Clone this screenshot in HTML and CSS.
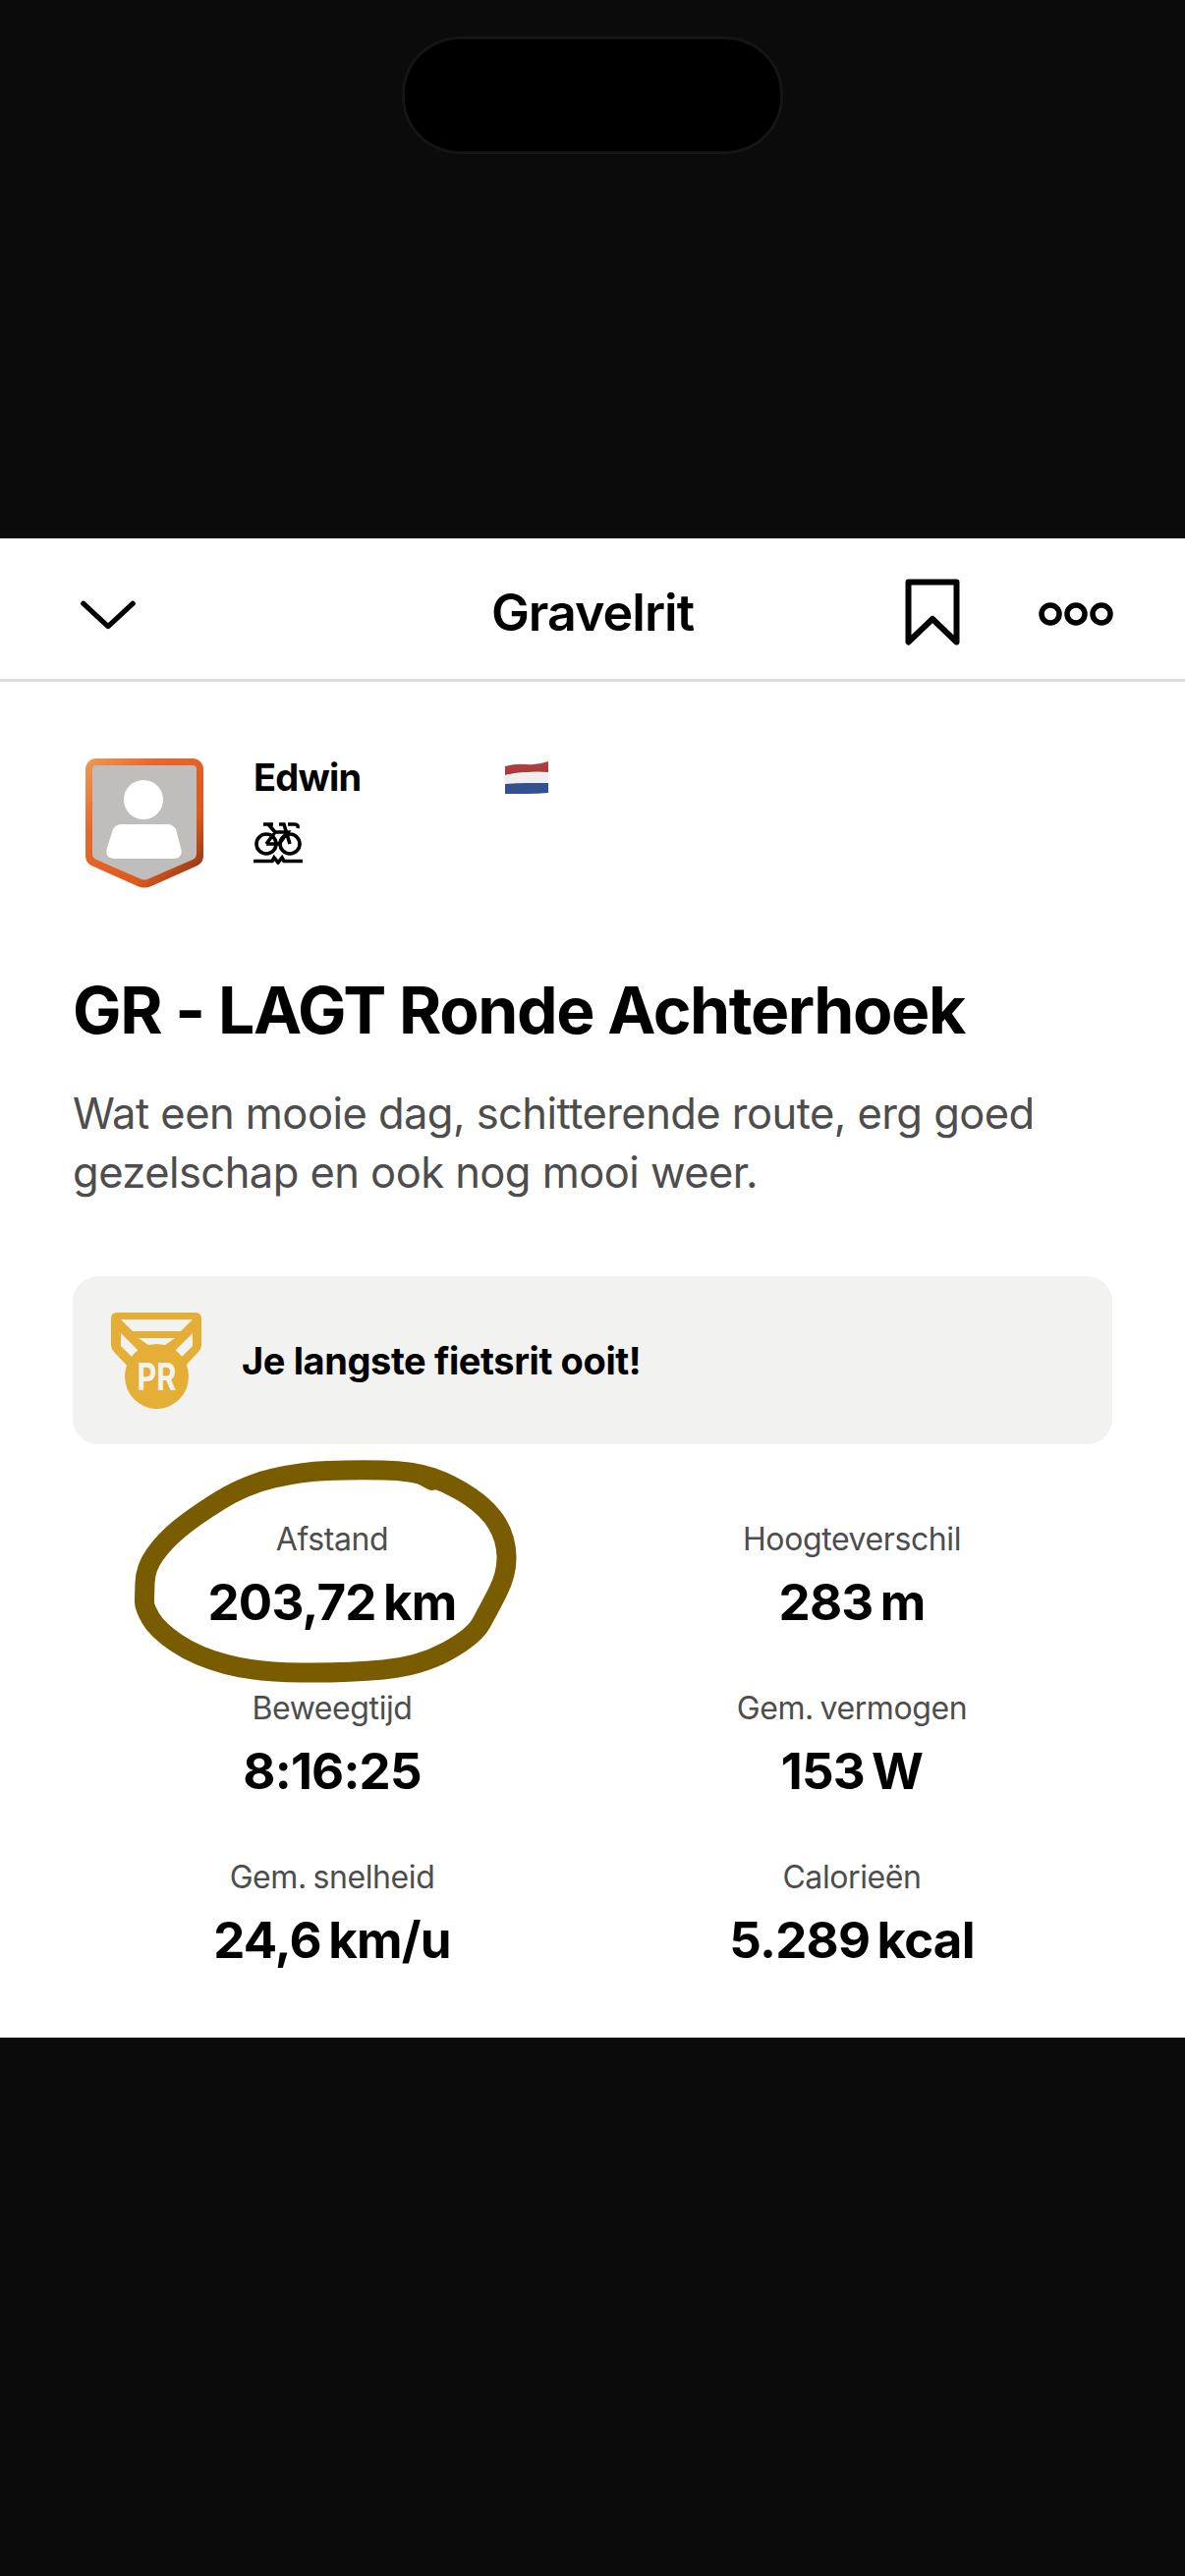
FILE: index.html
```html
<!DOCTYPE html>
<html lang="nl">
<head>
<meta charset="utf-8">
<title>Gravelrit</title>
<link rel="stylesheet" href="styles.css">
</head>
<body>
<div class="screen">
  <div class="top"><div class="island"></div></div>
  <main class="panel">
    <header class="nav">
      <svg class="nav-chevron" width="56" height="32" viewBox="0 0 58 32"><path d="M3 4 29 28 55 4" fill="none" stroke="#000" stroke-width="5.5" stroke-linecap="round" stroke-linejoin="round"/></svg>
      <h1 class="nav-title">Gravelrit</h1>
      <div class="nav-actions">
        <svg width="56" height="68" viewBox="0 0 56 68"><path d="M3.5 64.5V3.5h49v61L28 41Z" fill="none" stroke="#000" stroke-width="6" stroke-linecap="round" stroke-linejoin="round"/></svg>
        <svg class="nav-more" width="76" height="24" viewBox="0 0 76 24"><g fill="none" stroke="#000" stroke-width="5.5"><circle cx="12" cy="12" r="9"/><circle cx="38" cy="12" r="9"/><circle cx="64" cy="12" r="9"/></g></svg>
      </div>
    </header>
    <section class="athlete">
      <svg class="avatar" width="122" height="134" viewBox="0 0 122 134">
        <defs><linearGradient id="ring" x1="0" y1="0" x2="1" y2="1"><stop offset="0" stop-color="#ee9a55"/><stop offset=".3" stop-color="#e8682b"/><stop offset=".7" stop-color="#dd5a1f"/><stop offset="1" stop-color="#7c2a10"/></linearGradient></defs>
        <path d="M12 1H110a11 11 0 0 1 11 11V100q0 7-6 10L68 131q-7 3-14 0L7 110q-6-3-6-10V12A11 11 0 0 1 12 1Z" fill="url(#ring)"/>
        <path d="M12 8H110a4 4 0 0 1 4 4V98q0 4-4 6L64 124q-3 1-6 0L12 104q-4-2-4-6V12a4 4 0 0 1 4-4Z" fill="#bfbebc"/>
        <circle cx="60" cy="43" r="20" fill="#fff"/>
        <path d="M38 68H84q6 0 9 5L98 92q3 10-7 11H30q-10-1-7-11L29 73q3-5 9-5Z" fill="#fff"/>
      </svg>
      <div class="athlete-info">
        <div class="athlete-line">
          <span class="athlete-name">Edwin</span>
          <svg class="flag" width="46" height="35" viewBox="0 0 46 35"><defs><linearGradient id="fl-r" x1="0" x2="0" y1="0" y2="1"><stop offset="0" stop-color="#b5403f"/><stop offset="1" stop-color="#a33a3c"/></linearGradient></defs><path d="M1 6Q12 3 23 4T45 1V12Q34 11 23 12T1 15Z" fill="url(#fl-r)"/><path d="M1 15Q12 12 23 12T45 12V23Q34 23 23 23T1 24Z" fill="#efeff1"/><path d="M1 24Q12 23 23 23T45 23V33Q34 34 23 34T1 34Z" fill="#33508f"/></svg>
        </div>
        <svg class="sport" width="50" height="44" viewBox="0 0 50 44"><g fill="none" stroke="#000" stroke-width="3.6"><circle cx="13" cy="23" r="10"/><circle cx="37" cy="23" r="10"/><path d="M13 23 22 11H35L26 23H13M37 23 31 3H26M20 3H10M15 3 22 11M35 3H42Q46 3 45 7"/><path d="M0 40.500H19L21 37 25 42 29 37 31 40.500H50"/></g></svg>
      </div>
    </section>
    <section class="intro">
      <h2 class="activity-title">GR - LAGT Ronde Achterhoek</h2>
      <p class="activity-desc">Wat een mooie dag, schitterende route, erg goed gezelschap en ook nog mooi weer.</p>
    </section>
    <section class="highlight">
      <svg width="92" height="98" viewBox="0 0 92 98">
        <path d="M6 0H86Q92 0 92 6V33Q92 37 89 40L72 58H20L3 40Q0 37 0 33V6Q0 0 6 0Z" fill="#e5ae36"/>
        <g fill="#f2f2f1"><path d="M10 7H83L71 19H22Z"/><path d="M28 26H65L55 33H38Z"/><path d="M10 21 28 39 22 46 10 34Z"/><path d="M83 21 65 39 71 46 83 34Z"/></g>
        <ellipse cx="46.500" cy="65" rx="32.500" ry="33" fill="#e5ae36"/>
        <text x="46.500" y="79" class="pr-text" text-anchor="middle" textLength="40" lengthAdjust="spacingAndGlyphs">PR</text>
      </svg>
      <span class="highlight-text">Je langste fietsrit ooit!</span>
    </section>
    <section class="stats">
      <div class="stat"><span class="stat-label">Afstand</span><span class="stat-value">203,72 km</span></div>
      <div class="stat"><span class="stat-label">Hoogteverschil</span><span class="stat-value">283 m</span></div>
      <div class="stat"><span class="stat-label">Beweegtijd</span><span class="stat-value">8:16:25</span></div>
      <div class="stat"><span class="stat-label">Gem. vermogen</span><span class="stat-value">153 W</span></div>
      <div class="stat"><span class="stat-label">Gem. snelheid</span><span class="stat-value">24,6 km/u</span></div>
      <div class="stat"><span class="stat-label">Calorieën</span><span class="stat-value">5.289 kcal</span></div>
      <svg class="scribble" width="420" height="260" viewBox="0 0 420 260"><path d="M27 162Q27 157 27.500 142Q28 127 37.500 113.500Q47 100 62 87.500Q77 75 103.500 58.500Q130 42 158.500 35.500Q187 29 213.500 28Q240 27 270 27.500Q300 28 320 35Q340 42 358.500 54.500Q377 67 386 82Q395 97 395.500 115Q396 133 386.500 151.500Q377 170 369.500 183.500Q362 197 334.500 212Q307 227 270 230.500Q233 234 186.500 233.500Q140 233 110 225Q80 217 60 203.500Q40 190 33.500 178.500Q27 167 27 162Z" fill="none" stroke="#7a5c00" stroke-width="20" stroke-linecap="round" stroke-linejoin="round"/><path d="M305 31 320 39" fill="none" stroke="#7a5c00" stroke-width="18" stroke-linecap="round"/></svg>
    </section>
  </main>
  <div class="bottom"></div>
</div>
</body>
</html>
```
FILE: styles.css
```css
* { box-sizing: border-box; margin: 0; padding: 0; }
html, body { background: #0b0b0b; }
body { font-family: Inter, "Liberation Sans", sans-serif; color: #000; }
.screen { width: 1206px; height: 2622px; display: flex; flex-direction: column; overflow: hidden; }
.top { height: 548px; padding-top: 37px; display: flex; justify-content: center; align-items: flex-start; flex: none; }
.island { width: 388px; height: 120px; background: #000; border: 3px solid #151515; border-radius: 60px / 58px; }
.panel { height: 1526px; flex: none; background: #fff; }
.bottom { flex: 1; }
.nav { height: 146px; border-bottom: 3px solid #dcdcdc; padding: 6px 73px 0; display: grid; grid-template-columns: 1fr auto 1fr; align-items: center; }
.nav-chevron { margin: 6px 0 0 9px; }
.nav-title { font-size: 52px; font-weight: 600; letter-spacing: -1px; text-align: center; padding-top: 2px; }
.nav-actions { display: flex; justify-content: flex-end; align-items: center; gap: 80px; }
.nav-more { margin-top: 5px; }
.athlete { display: flex; gap: 49px; padding: 77px 0 0 86px; height: 292px; }
.athlete-info { display: flex; flex-direction: column; gap: 25px; width: 301px; margin-left: 1px; }
.athlete-line { display: flex; justify-content: space-between; align-items: center; height: 40px; }
.athlete-name { font-size: 38px; font-weight: 700; letter-spacing: -.8px; }
.intro { padding: 0 74px; }
.activity-title { font-size: 66px; font-weight: 700; letter-spacing: -1.4px; line-height: 84px; white-space: nowrap; }
.activity-desc { font-size: 43.5px; letter-spacing: -.55px; line-height: 60px; color: #4d4d4d; margin-top: 33px; }
.highlight { margin: 76px 74px 0; height: 171px; background: #f2f2f1; border-radius: 26px; display: flex; align-items: center; gap: 41px; padding-left: 39px; }
.pr-text { font-family: Inter, "Liberation Sans", sans-serif; font-size: 38px; font-weight: 700; fill: #f2f2f1; }
.highlight-text { font-size: 38px; font-weight: 700; letter-spacing: -.4px; }
.stats { position: relative; display: grid; grid-template-columns: 528px 530px; margin: 0 74px; padding-top: 75px; row-gap: 44px; justify-items: center; }
.stat { display: flex; flex-direction: column; align-items: center; height: 128px; }
.stat-label { font-size: 32px; letter-spacing: -.4px; word-spacing: -2px; line-height: 44px; color: #4d4d4d; }
.stat-value { font-size: 51px; font-weight: 700; line-height: 83px; letter-spacing: -.8px; word-spacing: -4px; }
.scribble { position: absolute; left: 46px; top: -1px; }
```
